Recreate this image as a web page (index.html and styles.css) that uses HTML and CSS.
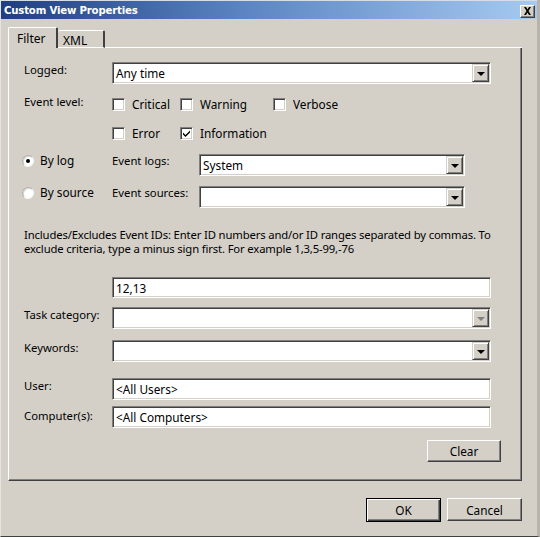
FILE: index.html
```html
<!DOCTYPE html>
<html>
<head>
<meta charset="utf-8">
<link rel="stylesheet" href="styles.css">
</head>
<body>
<div class="window">
  <div class="titlebar">
    <span class="title">Custom View Properties</span>
    <span class="close"><svg width="9" height="8" viewBox="0 0 9 8"><path d="M1 0h2l1.5 2.5L6 0h2L5.5 4 8 8H6L4.5 5.5 3 8H1l2.5-4z" fill="#000"/></svg></span>
  </div>
  <div class="client">
    <div class="tabs">
      <div class="tab active">Filter</div>
      <div class="tab">XML</div>
      <div class="tabline"></div>
    </div>
    <div class="panel">
      <div class="row r-logged">
        <div class="label">Logged:</div>
        <div class="combo wide"><span class="val">Any time</span><span class="arrow"><i class="tri"></i></span></div>
      </div>
      <div class="row r-level1">
        <div class="label">Event level:</div>
        <div class="checks">
          <label class="chk c1"><span class="box"></span>Critical</label>
          <label class="chk c2"><span class="box"></span>Warning</label>
          <label class="chk c3"><span class="box"></span>Verbose</label>
        </div>
      </div>
      <div class="row r-level2">
        <div class="label"></div>
        <div class="checks">
          <label class="chk c1"><span class="box"></span>Error</label>
          <label class="chk c2"><span class="box checked"><svg width="9" height="9" viewBox="0 0 9 9"><path d="M1 3.5 3.5 6 8 1.5V3.5L3.5 8 1 5.5z" fill="#000"/></svg></span>Information</label>
        </div>
      </div>
      <div class="row r-bylog">
        <div class="radio"><span class="rdot on"></span>By log</div>
        <div class="sublabel">Event logs:</div>
        <div class="combo narrow"><span class="val">System</span><span class="arrow"><i class="tri"></i></span></div>
      </div>
      <div class="row r-bysrc">
        <div class="radio"><span class="rdot"></span>By source</div>
        <div class="sublabel">Event sources:</div>
        <div class="combo narrow"><span class="val"></span><span class="arrow"><i class="tri"></i></span></div>
      </div>
      <p class="help">Includes/Excludes Event IDs: Enter ID numbers and/or ID ranges separated by commas. To exclude criteria, type a minus sign first. For example 1,3,5-99,-76</p>
      <div class="row r-ids">
        <div class="label"></div>
        <div class="input wide">12,13</div>
      </div>
      <div class="row r-task">
        <div class="label">Task category:</div>
        <div class="combo wide"><span class="val"></span><span class="arrow"><i class="tri dis"></i></span></div>
      </div>
      <div class="row r-kw">
        <div class="label">Keywords:</div>
        <div class="combo wide"><span class="val"></span><span class="arrow"><i class="tri"></i></span></div>
      </div>
      <div class="row r-user">
        <div class="label">User:</div>
        <div class="input wide">&lt;All Users&gt;</div>
      </div>
      <div class="row r-comp">
        <div class="label">Computer(s):</div>
        <div class="input wide">&lt;All Computers&gt;</div>
      </div>
      <div class="row r-clear">
        <div class="btn clear">Clear</div>
      </div>
    </div>
    <div class="footer">
      <div class="btn default">OK</div>
      <div class="btn">Cancel</div>
    </div>
  </div>
</div>
</body>
</html>
```
FILE: styles.css
```css
* { box-sizing: border-box; }
html, body { margin: 0; padding: 0; }
body {
  width: 540px;
  height: 537px;
  overflow: hidden;
  background: #d4d0c8;
  font-family: "Noto Sans", "Open Sans", sans-serif;
  font-size: 11.3px;
  color: #000;
}
.window {
  width: 540px;
  height: 537px;
  background: #d4d0c8;
  border-left: 1px solid #e6e4de;
  border-right: 3px solid #b8b4ac;
  border-bottom: 1px solid #404040;
  display: flex;
  flex-direction: column;
}
.titlebar {
  height: 19px;
  background: linear-gradient(90deg, #1f3f80 0%, #5b84c2 45%, #a6caf0 100%);
  display: flex;
  align-items: center;
  justify-content: space-between;
  padding: 0 2px 0 3px;
  border-top: 1px solid #d8dce8;
}
.title {
  color: #fff;
  font-family: "DejaVu Sans", sans-serif;
  font-weight: bold;
  font-size: 10.2px;
  letter-spacing: -0.2px;
}
.close {
  width: 15px;
  height: 13px;
  margin-top: 2px;
  background: #d4d0c8;
  border-top: 1px solid #fff;
  border-left: 1px solid #fff;
  border-right: 1px solid #404040;
  border-bottom: 1px solid #404040;
  box-shadow: inset -1px -1px 0 #808080;
  display: flex;
  align-items: center;
  justify-content: center;
}
.client {
  flex: 1;
  padding: 8px 15px 0 7px;
  display: flex;
  flex-direction: column;
}
.tabs {
  display: flex;
  align-items: flex-end;
  height: 21px;
}
.tab {
  height: 18px;
  padding: 1px 0 0 5px;
  width: 47px;
  border-top: 1px solid #fff;
  border-right: 2px solid #404040;
  border-radius: 2px 2px 0 0;
  font-size: 12px;
}
.tab.active {
  height: 21px;
  width: 50px;
  padding: 2px 0 0 8px;
  border-left: 1px solid #fff;
  border-right: 2px solid #404040;
  position: relative;
  z-index: 1;
}
.tabline {
  flex: 1;
  border-bottom: 1px solid #fff;
  height: 100%;
}
.tabs .tab:not(.active) { border-bottom: 1px solid #fff; }
.panel {
  height: 433px;
  border-left: 1px solid #fff;
  border-right: 1px solid #404040;
  border-bottom: 1px solid #404040;
  box-shadow: inset -1px -1px 0 #808080;
  padding: 14px 0 0 15px;
  display: flex;
  flex-direction: column;
}
.row {
  display: flex;
  align-items: flex-start;
}
.label {
  width: 88px;
  line-height: 15px;
  padding-top: 0;
  flex: none;
}
.combo, .input {
  height: 22px;
  background: #fff;
  border-top: 1px solid #808080;
  border-left: 1px solid #808080;
  border-right: 1px solid #fff;
  border-bottom: 1px solid #fff;
  box-shadow: inset 1px 1px 0 #404040, inset -1px -1px 0 #d4d0c8;
  display: flex;
  align-items: center;
  padding-left: 3px;
  font-size: 11.8px;
}
.wide { width: 379px; }
.narrow { width: 266px; }
.combo .val { flex: 1; }
.arrow {
  width: 17px;
  height: 18px;
  margin-right: 1px;
  background: #d4d0c8;
  border-top: 1px solid #d4d0c8;
  border-left: 1px solid #d4d0c8;
  border-right: 1px solid #404040;
  border-bottom: 1px solid #404040;
  box-shadow: inset 1px 1px 0 #fff, inset -1px -1px 0 #808080;
  display: flex;
  align-items: center;
  justify-content: center;
}
.tri {
  width: 0;
  height: 0;
  border-left: 4px solid transparent;
  border-right: 4px solid transparent;
  border-top: 4px solid #000;
  margin-top: 1px;
}
.tri.dis { border-top-color: #808080; }
.r-logged { height: 22px; }
.r-level1 { margin-top: 10px; height: 20px; }
.r-level2 { margin-top: 9px; height: 20px; }
.checks { display: flex; align-items: center; height: 20px; font-size: 11.8px; }
.chk {
  display: flex;
  align-items: center;
}
.chk.c1 { width: 68px; }
.chk.c2 { width: 93px; }
.box {
  width: 13px;
  height: 13px;
  margin-right: 7px;
  background: #fff;
  border-top: 1px solid #808080;
  border-left: 1px solid #808080;
  border-right: 1px solid #fff;
  border-bottom: 1px solid #fff;
  box-shadow: inset 1px 1px 0 #404040, inset -1px -1px 0 #d4d0c8;
  display: flex;
  align-items: center;
  justify-content: center;
}
.r-bylog { margin-top: 11px; height: 22px; }
.r-bysrc { margin-top: 10px; height: 22px; }
.radio {
  width: 88px;
  margin-left: -2px;
  margin-right: 2px;
  display: flex;
  align-items: center;
  line-height: 15px;
  margin-top: -1px;
  font-size: 11.8px;
}
.rdot {
  width: 12px;
  height: 12px;
  border-radius: 50%;
  margin-right: 6px;
  background: #fff;
  border: 1px solid;
  border-color: #b0b0b0 #f4f4f4 #f4f4f4 #b0b0b0;
  box-shadow: inset 1px 1px 0 #d8d8d8;
  position: relative;
}
.rdot.on::after {
  content: "";
  position: absolute;
  left: 3px;
  top: 3px;
  width: 4px;
  height: 4px;
  border-radius: 50%;
  background: #000;
}
.sublabel {
  width: 87px;
  line-height: 15px;
  margin-top: -1px;
}
.help {
  margin: 20px 0 0 0;
  width: 492px;
  line-height: 14px;
  letter-spacing: -0.15px;
}
.r-ids { margin-top: 21px; height: 21px; }
.r-ids .input { height: 21px; }
.r-task { margin-top: 9px; height: 22px; }
.r-kw { margin-top: 11px; height: 22px; }
.r-user { margin-top: 16px; height: 22px; }
.r-comp { margin-top: 6px; height: 22px; }
.r-comp .label { padding-top: 2px; }
.r-clear { margin-top: 12px; justify-content: flex-end; padding-right: 20px; }
.btn {
  width: 75px;
  height: 23px;
  background: #d4d0c8;
  border-top: 1px solid #fff;
  border-left: 1px solid #fff;
  border-right: 1px solid #404040;
  border-bottom: 1px solid #404040;
  box-shadow: inset -1px -1px 0 #808080;
  display: flex;
  align-items: center;
  justify-content: center;
  font-size: 11.8px;
}
.btn.clear { width: 74px; height: 22px; }
.footer {
  display: flex;
  justify-content: flex-end;
  gap: 6px;
  margin-top: 17px;
}
.btn.default {
  height: 24px;
  border: 1px solid #000;
  box-shadow: inset 1px 1px 0 #fff, inset -1px -1px 0 #404040, inset -2px -2px 0 #808080;
}
```
